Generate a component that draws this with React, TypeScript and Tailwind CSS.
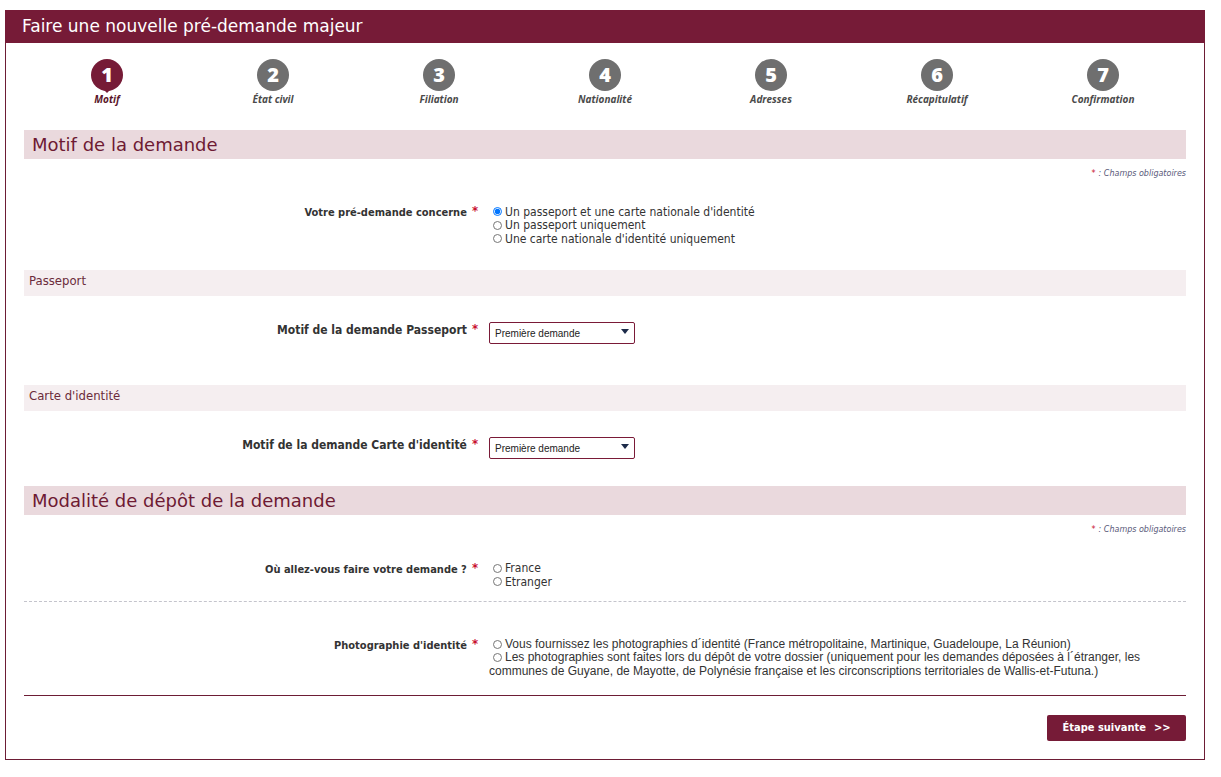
import React, { useState } from 'react';

const steps = ['Motif', 'État civil', 'Filiation', 'Nationalité', 'Adresses', 'Récapitulatif', 'Confirmation'];

const tahoma = { fontFamily: '"DejaVu Sans Condensed", "DejaVu Sans", sans-serif' };
const verdana = { fontFamily: '"DejaVu Sans", sans-serif' };

const Required = () => <span className="text-[#c8102e] text-[13px] font-bold ml-[5px] relative top-[-1px]">*</span>;

const Mandatory = () => (
  <div className="flex justify-end h-[30px] items-center text-[8px] italic text-[#5a5a7a]" style={verdana}>
    <span className="text-[#c8102e] not-italic mr-[3px]">*</span> : Champs obligatoires
  </div>
);

const SectionTitle = ({ children }: { children: React.ReactNode }) => (
  <div className="h-[29px] bg-[#ead9dd] flex items-center px-[8px] text-[18px] text-[#6e1a33]" style={verdana}>{children}</div>
);

const SubTitle = ({ children }: { children: React.ReactNode }) => (
  <div className="h-[26px] bg-[#f5eef0] pt-[1px] px-[5px] text-[13px] text-[#6b2b3b]">{children}</div>
);

const Radio = ({ name, label, checked, onChange }: { name: string; label: string; checked: boolean; onChange: () => void }) => (
  <label className="flex items-center h-[13.5px] text-[12px] text-[#333]">
    <input type="radio" name={name} checked={checked} onChange={onChange} className="w-[9px] h-[9px] m-0 ml-[4px] mr-[3px]" />
    {label}
  </label>
);

const Field = ({ label, children, className = '', big = false }: { label: string; children: React.ReactNode; className?: string; big?: boolean }) => (
  <div className={`flex ${className}`}>
    <div className={`w-[457px] text-right font-bold text-[#333] leading-[13.5px] pr-[3px] ${big ? 'text-[12px]' : 'text-[11px]'}`}>
      {label}<Required />
    </div>
    <div className="ml-[8px] flex-1">{children}</div>
  </div>
);

const Select = () => (
  <div className="relative w-[146px] h-[22px]">
    <select className="appearance-none w-full h-full border border-[#7a1a37] rounded-[2px] bg-white pl-[5px] text-[10px] text-[#222] outline-none" style={{ fontFamily: '"Liberation Sans", sans-serif' }}>
      <option>Première demande</option>
    </select>
    <svg className="absolute right-[6px] top-[9px] pointer-events-none" width="8" height="5" viewBox="0 0 8 5">
      <path d="M0 0h8L4 5z" fill="#1d2b4a" />
    </svg>
  </div>
);

export default function App() {
  const [concerne, setConcerne] = useState(0);
  const [lieu, setLieu] = useState(-1);
  const [photo, setPhoto] = useState(-1);

  return (
    <div className="w-[1221px] h-[777px] bg-white pt-[10px] pl-[5px]" style={tahoma}>
      <div className="w-[1200px] h-[750px] border border-[#6d1d35] border-t-0">
        <div className="h-[33px] bg-[#761b37] text-white text-[17px] flex items-center pl-[17px] -ml-px -mr-px" style={verdana}>
          Faire une nouvelle pré-demande majeur
        </div>

        <div className="px-[18px]">
          <div className="grid grid-cols-7 pt-[16px] h-[87px]">
            {steps.map((s, i) => (
              <div key={s} className="flex flex-col items-center">
                <div className="relative">
                  <div className={`w-[32px] h-[32px] rounded-full flex items-center justify-center text-white text-[20px] font-extrabold ${i === 0 ? 'bg-[#761b37]' : 'bg-[#6f6f6f]'}`} style={{ fontFamily: '"Open Sans", sans-serif' }}>
                    {i + 1}
                  </div>
                  {i === 0 && <div className="absolute left-[13px] bottom-[-2px] w-0 h-0 border-l-[3px] border-r-[3px] border-t-[3px] border-l-transparent border-r-transparent border-t-[#761b37]" />}
                </div>
                <div className={`mt-[1px] text-[10px] italic font-bold ${i === 0 ? 'text-[#5a1529]' : 'text-[#4a4a4a]'}`} style={{ fontFamily: '"Open Sans", sans-serif' }}>
                  {s}
                </div>
              </div>
            ))}
          </div>

          <SectionTitle>Motif de la demande</SectionTitle>
          <Mandatory />
          <Field label="Votre pré-demande concerne" className="mt-[16px]">
            {['Un passeport et une carte nationale d\'identité', 'Un passeport uniquement', 'Une carte nationale d\'identité uniquement'].map((l, i) => (
              <Radio key={l} name="concerne" label={l} checked={concerne === i} onChange={() => setConcerne(i)} />
            ))}
          </Field>

          <div className="mt-[24px]"><SubTitle>Passeport</SubTitle></div>
          <Field label="Motif de la demande Passeport" big className="mt-[24px] items-center">
            <Select />
          </Field>

          <div className="mt-[43px]"><SubTitle>Carte d'identité</SubTitle></div>
          <Field label="Motif de la demande Carte d'identité" big className="mt-[24px] items-center">
            <Select />
          </Field>

          <div className="mt-[29px]"><SectionTitle>Modalité de dépôt de la demande</SectionTitle></div>
          <Mandatory />
          <Field label="Où allez-vous faire votre demande ?" className="mt-[17px]">
            {['France', 'Etranger'].map((l, i) => (
              <Radio key={l} name="lieu" label={l} checked={lieu === i} onChange={() => setLieu(i)} />
            ))}
          </Field>

          <div className="mt-[12px] border-t border-dashed border-[#c4c4cc]" />

          <Field label="Photographie d'identité" className="mt-[36px]">
            <div className="text-[12px] text-[#333] leading-[13.5px]" style={{ fontFamily: '"Liberation Sans", sans-serif' }}>
              <label className="flex items-center">
                <input type="radio" name="photo" checked={photo === 0} onChange={() => setPhoto(0)} className="w-[9px] h-[9px] m-0 ml-[4px] mr-[3px]" />
                Vous fournissez les photographies d´identité (France métropolitaine, Martinique, Guadeloupe, La Réunion)
              </label>
              <label className="block pr-[36px]">
                <input type="radio" name="photo" checked={photo === 1} onChange={() => setPhoto(1)} className="w-[9px] h-[9px] m-0 ml-[4px] mr-[3px] align-[-1px]" />
                Les photographies sont faites lors du dépôt de votre dossier (uniquement pour les demandes déposées à l´étranger, les communes de Guyane, de Mayotte, de Polynésie française et les circonscriptions territoriales de Wallis-et-Futuna.)
              </label>
            </div>
          </Field>

          <div className="mt-[17px] border-t border-[#6d1d35]" />

          <div className="flex justify-end mt-[19px]">
            <button className="w-[139px] h-[26px] bg-[#761b37] rounded-[2px] text-white text-[11px] font-bold flex items-center justify-center gap-[8px]">
              <span>Étape suivante</span><span>&gt;&gt;</span>
            </button>
          </div>
        </div>
      </div>
    </div>
  );
}
